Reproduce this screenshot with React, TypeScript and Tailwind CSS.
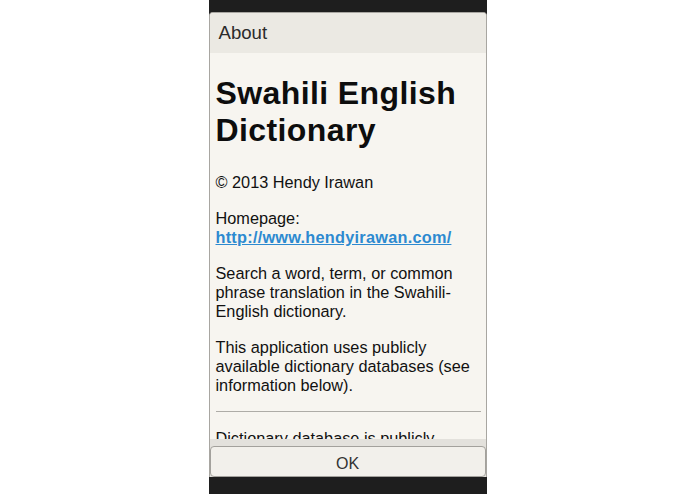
export default function App() {
  return (
    <main
      className="flex h-[494px] w-full justify-center bg-white"
      style={{ fontFamily: '"Liberation Sans", Arial, sans-serif' }}
    >
      <div className="flex w-[278px] flex-col bg-[#1e1e1e] pt-[12px] pb-[17px]">
        <section className="flex min-h-0 flex-1 flex-col overflow-hidden rounded-t-[4px] border-x border-t border-[#a8a6a1] bg-[#f7f5f0]">
          <header className="flex h-[40px] shrink-0 items-center bg-[#ebe9e3] px-[9px] text-[18.6px] text-[#2b2b2b]">
            About
          </header>
          <div className="min-h-0 flex-1 overflow-hidden pl-[6px] pr-[5px] text-[16.3px] leading-[19px] text-[#111]">
            <h1 className="mt-[22px] text-[32px] leading-[37px] font-bold tracking-[0.4px] text-[#0d0d0d]">
              Swahili English Dictionary
            </h1>
            <p className="mt-[24px]">© 2013 Hendy Irawan</p>
            <p className="mt-[17px]">
              Homepage:
              <br />
              <a href="#" className="font-bold tracking-[0.25px] text-[#2d8ad0] underline">
                http://www.hendyirawan.com/
              </a>
            </p>
            <p className="mt-[17px]">
              Search a word, term, or common phrase translation in the Swahili-English dictionary.
            </p>
            <p className="mt-[17px]">
              This application uses publicly available dictionary databases (see information below).
            </p>
            <hr className="mt-[16px] border-t border-[#aeaca7]" />
            <p className="mt-[17px]">Dictionary database is publicly available from the Kamusi Project.</p>
          </div>
          <footer className="shrink-0 bg-[#e3e1dc] pt-[7px]">
            <button className="flex h-[31px] w-full items-center justify-center rounded-[4px] border border-[#a3a19c] bg-[#f2f0eb] pt-[4px] text-[16px] text-[#333]">
              OK
            </button>
          </footer>
        </section>
      </div>
    </main>
  );
}
